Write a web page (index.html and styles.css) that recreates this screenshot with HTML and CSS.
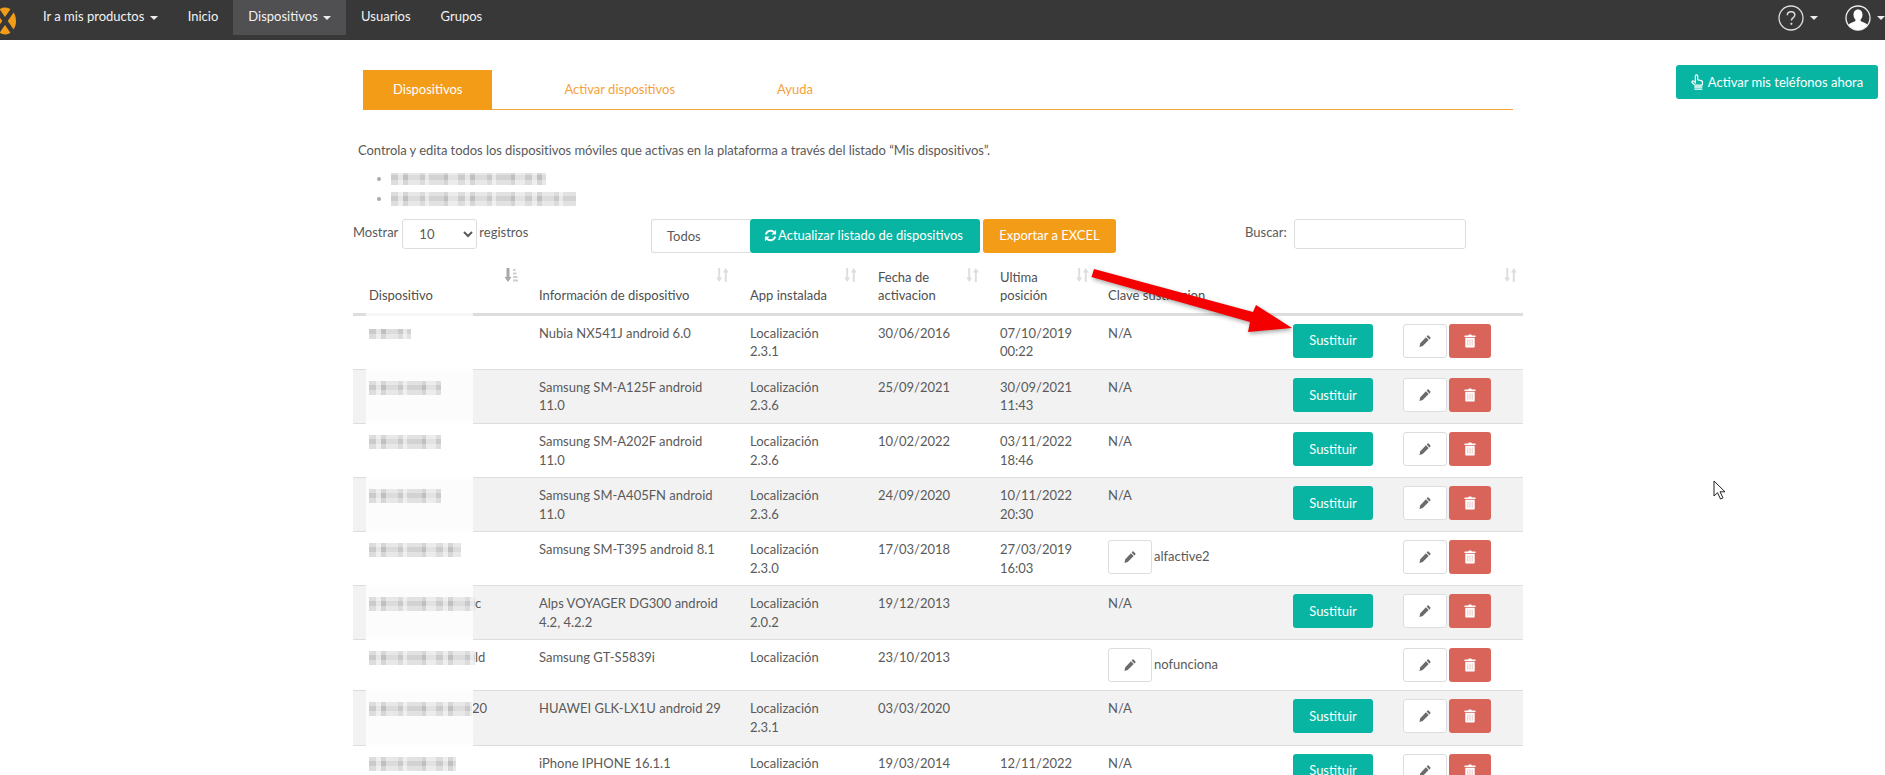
FILE: index.html
```html
<!DOCTYPE html>
<html lang="es">
<head>
<meta charset="utf-8">
<title>Dispositivos</title>
<link rel="stylesheet" href="styles.css">
</head>
<body>
<svg class="defs" width="0" height="0" aria-hidden="true">
  <symbol id="i-pencil" viewBox="0 0 12 12"><path d="M8.6.6a.7.7 0 0 1 1 0l1.8 1.8a.7.7 0 0 1 0 1l-1 1L7.6 1.6zM6.9 2.3l2.8 2.8-6 6-3.2.8.6-3.5z"/></symbol>
  <symbol id="i-trash" viewBox="0 0 12 14"><path d="M4.2 1.6 4.8.4h2.4l.6 1.2H11a.6.6 0 0 1 .6.6v.8H.4v-.8a.6.6 0 0 1 .6-.6z"/><path d="M1.3 3.8h9.4v8.6a1.2 1.2 0 0 1-1.2 1.2h-7a1.2 1.2 0 0 1-1.2-1.2z"/><path class="slit" d="M3.3 5.4h1v6.4h-1zM5.5 5.4h1v6.4h-1zM7.7 5.4h1v6.4h-1z"/></symbol>
  <symbol id="i-sort" viewBox="0 0 13 14"><path d="M2.2 0h2v9.5h2L3.2 14 .2 9.5h2z"/><path d="M8.8 14h2V4.5h2L9.8 0l-3 4.5h2z"/></symbol>
  <symbol id="i-sorted" viewBox="0 0 13 14"><path d="M1.500 0h3v9h2L3 14-.5 9h2z"/><path class="light" d="M8 1h2.500v2H8zM8 4.500h3.500v2H8zM8 8h4.500v2H8zM8 11.500h5v2H8z"/></symbol>
</svg>
<div class="page">
  <header class="topbar">
    <svg class="logo" viewBox="0 0 18 40" width="18" height="40" aria-hidden="true">
      <ellipse cx="5" cy="21" rx="11" ry="13.500" fill="#f39c18"/>
      <path d="M-4 8 14 34M14 8-4 34" stroke="#383838" stroke-width="4.500" fill="none"/>
    </svg>
    <nav class="menu">
      <a class="menu-item">Ir a mis productos <span class="caret"></span></a>
      <a class="menu-item">Inicio</a>
      <a class="menu-item active">Dispositivos <span class="caret"></span></a>
      <a class="menu-item">Usuarios</a>
      <a class="menu-item">Grupos</a>
    </nav>
    <div class="top-tools">
      <span class="tool">
        <svg class="ring" viewBox="0 0 26 26" width="26" height="26" aria-hidden="true">
          <circle cx="13" cy="13" r="12" fill="none" stroke="#ddd" stroke-width="1.300"/>
          <path d="M9.300 10.200c0-2.200 1.600-3.500 3.800-3.500s3.700 1.200 3.700 3.200c0 2.900-3.400 2.900-3.400 5.600" fill="none" stroke="#ddd" stroke-width="1.500"/>
          <circle cx="13.400" cy="18.800" r="1.100" fill="#ddd"/>
        </svg>
        <span class="caret"></span>
      </span>
      <span class="tool">
        <svg class="ring" viewBox="0 0 26 26" width="26" height="26" aria-hidden="true">
          <circle cx="13" cy="13" r="12" fill="#383838" stroke="#eee" stroke-width="1.300"/>
          <path d="M13 4.500c3 0 4.500 2.400 4.500 5.200 0 2-.8 3.800-1.900 4.900v1.500c1 1 5.600 1.800 6.900 3.800a11.500 11.500 0 0 1-19 0c1.300-2 5.900-2.800 6.900-3.800v-1.500c-1.100-1.100-1.900-2.900-1.900-4.900 0-2.800 1.500-5.200 4.500-5.200z" fill="#fff"/>
        </svg>
        <span class="caret"></span>
      </span>
    </div>
  </header>

  <div class="content">
    <main class="main">
      <div class="tabs">
        <a class="tab active">Dispositivos</a>
        <a class="tab">Activar dispositivos</a>
        <a class="tab">Ayuda</a>
      </div>

      <p class="intro">Controla y edita todos los dispositivos móviles que activas en la plataforma a través del listado “Mis dispositivos”.</p>
      <ul class="hidden-list">
        <li><span class="mosaic m-a"></span></li>
        <li><span class="mosaic m-b"></span></li>
      </ul>

      <div class="controls">
        <div class="length">
          <span>Mostrar</span>
          <select class="field select"><option>10</option></select>
          <span>registros</span>
        </div>
        <div class="field todos">Todos</div>
        <a class="btn teal refresh">
          <svg viewBox="0 0 14 14" width="13" height="13" aria-hidden="true"><path d="M2 6a5.200 5.200 0 0 1 9-2.300M12 8a5.200 5.200 0 0 1-9 2.300" fill="none" stroke="#fff" stroke-width="2"/><path d="M13 .8v5H8zM1 13.200v-5h5z" fill="#fff"/></svg>Actualizar listado de dispositivos</a>
        <a class="btn orange export">Exportar a EXCEL</a>
        <div class="search"><span>Buscar:</span><input class="field search-input" type="text"></div>
      </div>

      <table class="devices">
        <colgroup>
          <col class="c1"><col class="c2"><col class="c3"><col class="c4"><col class="c5"><col class="c6"><col class="c7"><col class="c8">
        </colgroup>
        <thead>
          <tr>
            <th class="first">Dispositivo<svg class="sort dark" aria-hidden="true"><use href="#i-sorted"/></svg></th>
            <th>Información de dispositivo<svg class="sort" aria-hidden="true"><use href="#i-sort"/></svg></th>
            <th>App instalada<svg class="sort" aria-hidden="true"><use href="#i-sort"/></svg></th>
            <th>Fecha de<br>activacion<svg class="sort" aria-hidden="true"><use href="#i-sort"/></svg></th>
            <th>Ultima<br>posición<svg class="sort near" aria-hidden="true"><use href="#i-sort"/></svg></th>
            <th>Clave sustitucion</th>
            <th></th>
            <th><svg class="sort last" aria-hidden="true"><use href="#i-sort"/></svg></th>
          </tr>
        </thead>
        <tbody>
          <tr>
            <td class="first"><span class="mosaic w42"></span></td>
            <td>Nubia NX541J android 6.0</td>
            <td>Localización<br>2.3.1</td>
            <td>30/06/2016</td>
            <td>07/10/2019<br>00:22</td>
            <td>N/A</td>
            <td><a class="btn teal swap">Sustituir</a></td>
            <td><div class="row-actions"><a class="btn plain"><svg class="ico" aria-hidden="true"><use href="#i-pencil"/></svg></a><a class="btn red"><svg class="ico-t" aria-hidden="true"><use href="#i-trash"/></svg></a></div></td>
          </tr>
          <tr>
            <td class="first"><span class="mosaic w72"></span></td>
            <td>Samsung SM-A125F android<br>11.0</td>
            <td>Localización<br>2.3.6</td>
            <td>25/09/2021</td>
            <td>30/09/2021<br>11:43</td>
            <td>N/A</td>
            <td><a class="btn teal swap">Sustituir</a></td>
            <td><div class="row-actions"><a class="btn plain"><svg class="ico" aria-hidden="true"><use href="#i-pencil"/></svg></a><a class="btn red"><svg class="ico-t" aria-hidden="true"><use href="#i-trash"/></svg></a></div></td>
          </tr>
          <tr>
            <td class="first"><span class="mosaic w72"></span></td>
            <td>Samsung SM-A202F android<br>11.0</td>
            <td>Localización<br>2.3.6</td>
            <td>10/02/2022</td>
            <td>03/11/2022<br>18:46</td>
            <td>N/A</td>
            <td><a class="btn teal swap">Sustituir</a></td>
            <td><div class="row-actions"><a class="btn plain"><svg class="ico" aria-hidden="true"><use href="#i-pencil"/></svg></a><a class="btn red"><svg class="ico-t" aria-hidden="true"><use href="#i-trash"/></svg></a></div></td>
          </tr>
          <tr>
            <td class="first"><span class="mosaic w72"></span></td>
            <td>Samsung SM-A405FN android<br>11.0</td>
            <td>Localización<br>2.3.6</td>
            <td>24/09/2020</td>
            <td>10/11/2022<br>20:30</td>
            <td>N/A</td>
            <td><a class="btn teal swap">Sustituir</a></td>
            <td><div class="row-actions"><a class="btn plain"><svg class="ico" aria-hidden="true"><use href="#i-pencil"/></svg></a><a class="btn red"><svg class="ico-t" aria-hidden="true"><use href="#i-trash"/></svg></a></div></td>
          </tr>
          <tr>
            <td class="first"><span class="mosaic w92"></span></td>
            <td>Samsung SM-T395 android 8.1</td>
            <td>Localización<br>2.3.0</td>
            <td>17/03/2018</td>
            <td>27/03/2019<br>16:03</td>
            <td><div class="key"><a class="btn plain"><svg class="ico" aria-hidden="true"><use href="#i-pencil"/></svg></a><span class="key-text">alfactive2</span></div></td>
            <td></td>
            <td><div class="row-actions"><a class="btn plain"><svg class="ico" aria-hidden="true"><use href="#i-pencil"/></svg></a><a class="btn red"><svg class="ico-t" aria-hidden="true"><use href="#i-trash"/></svg></a></div></td>
          </tr>
          <tr>
            <td class="first"><span class="mosaic w106"></span>c</td>
            <td>Alps VOYAGER DG300 android<br>4.2, 4.2.2</td>
            <td>Localización<br>2.0.2</td>
            <td>19/12/2013</td>
            <td></td>
            <td>N/A</td>
            <td><a class="btn teal swap">Sustituir</a></td>
            <td><div class="row-actions"><a class="btn plain"><svg class="ico" aria-hidden="true"><use href="#i-pencil"/></svg></a><a class="btn red"><svg class="ico-t" aria-hidden="true"><use href="#i-trash"/></svg></a></div></td>
          </tr>
          <tr>
            <td class="first"><span class="mosaic w106"></span>ld</td>
            <td>Samsung GT-S5839i</td>
            <td>Localización</td>
            <td>23/10/2013</td>
            <td></td>
            <td><div class="key"><a class="btn plain"><svg class="ico" aria-hidden="true"><use href="#i-pencil"/></svg></a><span class="key-text">nofunciona</span></div></td>
            <td></td>
            <td><div class="row-actions"><a class="btn plain"><svg class="ico" aria-hidden="true"><use href="#i-pencil"/></svg></a><a class="btn red"><svg class="ico-t" aria-hidden="true"><use href="#i-trash"/></svg></a></div></td>
          </tr>
          <tr>
            <td class="first"><span class="mosaic w103"></span>20</td>
            <td>HUAWEI GLK-LX1U android 29</td>
            <td>Localización<br>2.3.1</td>
            <td>03/03/2020</td>
            <td></td>
            <td>N/A</td>
            <td><a class="btn teal swap">Sustituir</a></td>
            <td><div class="row-actions"><a class="btn plain"><svg class="ico" aria-hidden="true"><use href="#i-pencil"/></svg></a><a class="btn red"><svg class="ico-t" aria-hidden="true"><use href="#i-trash"/></svg></a></div></td>
          </tr>
          <tr>
            <td class="first"><span class="mosaic w87"></span></td>
            <td>iPhone IPHONE 16.1.1</td>
            <td>Localización<br>2.3.1</td>
            <td>19/03/2014</td>
            <td>12/11/2022<br>10:30</td>
            <td>N/A</td>
            <td><a class="btn teal swap">Sustituir</a></td>
            <td><div class="row-actions"><a class="btn plain"><svg class="ico" aria-hidden="true"><use href="#i-pencil"/></svg></a><a class="btn red"><svg class="ico-t" aria-hidden="true"><use href="#i-trash"/></svg></a></div></td>
          </tr>
        </tbody>
      </table>
    </main>

    <aside class="side">
      <a class="btn teal activate">
        <svg viewBox="0 0 12 15" width="13" height="16" aria-hidden="true"><path d="M4 8V2a1.100 1.100 0 0 1 2.200 0v3.400l3.300.9c.9.3 1.300.9 1.200 1.800l-.3 2.400H3.700L1.200 8.200c-.9-1 .3-2.300 1.400-1.500z" fill="none" stroke="#fff" stroke-width="1.200"/><path d="M3 12.200h7.500M3 14.200h7.500" stroke="#fff" stroke-width="1.200"/></svg>
        Activar mis teléfonos ahora</a>
    </aside>
  </div>

  <svg class="arrow" viewBox="0 0 220 80" width="220" height="80" aria-hidden="true">
    <path d="M9 7 6.500 15 165 60 163 70 207 66 171 43 168 50z" fill="#f40000"/>
  </svg>
  <svg class="pointer" viewBox="0 0 13 21" width="13" height="21" aria-hidden="true">
    <path d="M1 1v15l3.500-3.300 3 6.300 2.500-1.200-3-6H12z" fill="#fff" stroke="#222" stroke-width="1"/>
  </svg>
</div>
</body>
</html>
```
FILE: styles.css
```css
* { box-sizing: border-box; }
html, body { margin: 0; padding: 0; }
body {
  font-family: Lato, "Liberation Sans", sans-serif;
  font-size: 13px;
  line-height: 18.57px;
  color: #5a5a5a;
  background: #fff;
}
.defs { position: absolute; }
.page { position: relative; height: 100vh; overflow: hidden; }

/* top bar */
.topbar { display: flex; height: 40px; background: #383838; color: #fff; }
.logo { flex: none; display: block; }
.menu { display: flex; margin-left: 10px; align-items: flex-start; }
.menu-item { display: block; height: 35px; padding: 7px 15px 0; color: #f2f2f2; white-space: nowrap; }
.menu-item.active { background: #505052; }
.caret {
  display: inline-block;
  width: 0; height: 0;
  margin-left: 2px;
  vertical-align: middle;
  border-top: 4px solid #eee;
  border-left: 4px solid transparent;
  border-right: 4px solid transparent;
}
.top-tools { display: flex; margin-left: auto; gap: 27px; padding: 5px 0 0 0; }
.tool { display: flex; align-items: center; gap: 4px; height: 26px; }
.ring { display: block; }

/* layout */
.content { display: flex; padding-left: 353px; }
.main { width: 1170px; flex: none; }
.side { margin: 25px 0 0 153px; }

/* tabs */
.tabs { display: flex; width: 1150px; height: 40px; margin: 30px 0 0 10px; border-bottom: 1px solid #f3a63c; gap: 42px; }
.tab { display: block; height: 40px; padding: 10px 30px 0; color: #f7a13a; white-space: nowrap; }
.tab.active { color: #fff; background: #f39c18; }

.intro { margin: 31px 0 0 5px; letter-spacing: -.055px; }
.hidden-list { list-style: disc; margin: 9px 0 0; padding: 0 0 0 39px; color: #aaa; }
.hidden-list li { height: 20px; }

.mosaic {
  display: inline-block;
  position: relative;
  z-index: 2;
  height: 14px;
  vertical-align: -3px;
  filter: blur(.6px);
  background-color: #dcdcdc;
  background-image:
    repeating-linear-gradient(0deg, rgba(255,255,255,.35) 0 5px, rgba(255,255,255,0) 5px 10px),
    repeating-linear-gradient(90deg, #cbcbcd 0 7px, #e6e6e6 7px 12px, #c0c0c2 12px 17px, #dcdcdc 17px 29px, #c9c9cb 29px 34px, #e8e8e8 34px 38px, #d2d2d2 38px 53px, #bfbfc1 53px 57px, #e2e2e2 57px 67px);
}
.m-a { width: 155px; height: 12px; vertical-align: -2px; margin-left: -1px; }
.m-b { width: 185px; height: 14px; margin-left: -1px; }
.w42 { width: 42px; height: 10px; vertical-align: -1px; }
.w72 { width: 72px; }
.w87 { width: 87px; }
.w92 { width: 92px; }
.w103 { width: 103px; }
.w106 { width: 106px; }

/* controls */
.controls { display: flex; align-items: flex-start; margin-top: 10px; height: 34px; }
.length { display: flex; width: 298px; align-items: flex-start; line-height: 27px; }
.field { height: 30px; border: 1px solid #ddd; border-radius: 3px; background: #fff; color: #5a5a5a; font: inherit; }
.select { width: 75px; padding: 0 0 0 12px; margin: 0 2px 0 4px; }
.todos { width: 99px; height: 34px; padding: 7px 0 0 15px; border-radius: 3px 0 0 3px; border-right: 0; }
.btn {
  display: inline-flex;
  align-items: center;
  justify-content: center;
  height: 34px;
  border-radius: 3px;
  color: #fff;
  white-space: nowrap;
}
.teal { background: #08b5a2; }
.orange { background: #f39c18; }
.red { background: #d9645a; }
.plain { background: #fff; border: 1px solid #ddd; }
.refresh { width: 230px; gap: 1px; padding-right: 3px; }
.export { width: 133px; margin-left: 3px; }
.search { display: flex; gap: 7px; margin-left: 129px; line-height: 27px; }
.search-input { width: 172px; }

/* table */
.devices { width: 1170px; margin-top: 7px; border-collapse: collapse; table-layout: fixed; }
.c1 { width: 178px; } .c2 { width: 211px; } .c3 { width: 128px; } .c4 { width: 122px; }
.c5 { width: 108px; } .c6 { width: 185px; } .c7 { width: 110px; } .c8 { width: 128px; }
.devices th {
  position: relative;
  padding: 8px;
  font-weight: 400;
  color: #4f4f4f;
  text-align: left;
  vertical-align: bottom;
  white-space: nowrap;
  border-bottom: 3px solid #ddd;
}
.devices td {
  padding: 8px;
  vertical-align: top;
  white-space: nowrap;
  border-bottom: 1px solid #ddd;
}
.devices tbody tr:nth-child(even) { background: #f2f2f2; }
.devices .first { position: relative; padding-left: 16px; }
.devices td.first::before {
  content: "";
  position: absolute;
  z-index: 1;
  left: 13px;
  width: 107px;
  top: -3px;
  bottom: -3px;
  background: rgba(255,255,255,.72);
}
.sort { position: absolute; top: 8px; right: 13px; width: 13px; height: 14px; fill: #dedede; }
.sort.near { right: 11px; }
.sort.last { right: 6px; }
.sort.dark { fill: #a8a8a8; }
.swap { width: 80px; }
.row-actions { display: flex; gap: 2px; }
.row-actions .plain, .key .plain { width: 44px; }
.row-actions .red { width: 42px; }
.key { display: flex; gap: 2px; }
.key-text { padding-top: 7px; }
.ico { width: 12px; height: 12px; fill: #6b6b6b; }
.ico-t { width: 12px; height: 14px; fill: #fff; }
.slit { fill: #f0c4c0; }
.light { fill: #d0d0d0; }

/* right column */
.activate { width: 202px; gap: 4px; }

/* annotations over the page */
.arrow { position: absolute; left: 1085px; top: 262px; filter: drop-shadow(1px 2px 2px rgba(0,0,0,.35)); }
.pointer { position: absolute; left: 1713px; top: 480px; }
```
